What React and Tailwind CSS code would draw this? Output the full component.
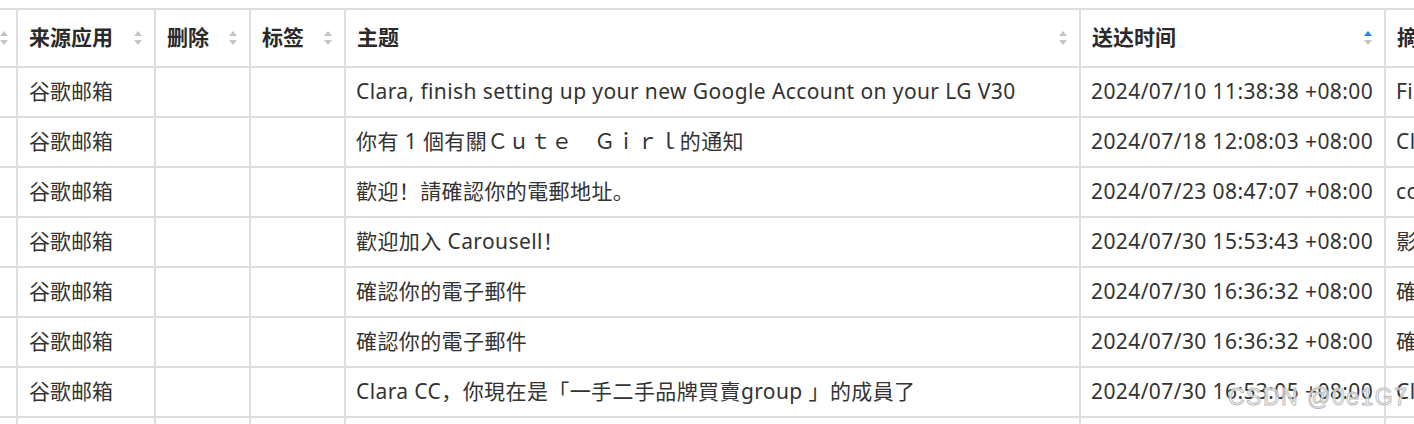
import React from 'react';

const rows = [
  ['谷歌邮箱', 'Clara, finish setting up your new Google Account on your LG V30', '2024/07/10 11:38:38 +08:00', 'Finish setting up your new Google Account'],
  ['谷歌邮箱', '你有 1 個有關Ｃｕｔｅ　Ｇｉｒｌ的通知', '2024/07/18 12:08:03 +08:00', 'Clara CC，Cute Girl 有新動態'],
  ['谷歌邮箱', '歡迎！請確認你的電郵地址。', '2024/07/23 08:47:07 +08:00', 'confirm your email address'],
  ['谷歌邮箱', '歡迎加入 Carousell！', '2024/07/30 15:53:43 +08:00', '影響力'],
  ['谷歌邮箱', '確認你的電子郵件', '2024/07/30 16:36:32 +08:00', '確認你的電子郵件'],
  ['谷歌邮箱', '確認你的電子郵件', '2024/07/30 16:36:32 +08:00', '確認你的電子郵件'],
  ['谷歌邮箱', 'Clara CC，你現在是「一手二手品牌買賣group 」的成員了', '2024/07/30 16:53:05 +08:00', 'Clara CC'],
  ['谷歌邮箱', '歡迎加入', '2024/07/31 09:12:44 +08:00', '歡迎'],
];

const SortIcon = ({ active }) => (
  <svg width="8" height="14" viewBox="0 0 8 14" className="shrink-0">
    <polygon points="0,5 4,0 8,5" fill={active ? '#1e88e5' : '#c4c4c4'} />
    <polygon points="0,9 8,9 4,14" fill="#c4c4c4" />
  </svg>
);

const cell = 'border-r-2 border-b-2 border-[#dedede] overflow-hidden whitespace-nowrap flex items-center';

export default function App() {
  const headers = [
    { label: '', active: false },
    { label: '来源应用' },
    { label: '删除' },
    { label: '标签' },
    { label: '主题' },
    { label: '送达时间', active: true },
    { label: '摘要' },
  ];

  return (
    <div
      className="relative w-[1414px] h-[424px] overflow-hidden bg-white pt-2 text-[#333] text-[21px] tracking-[0.4px]"
      style={{ fontFamily: '"Noto Sans", "Noto Sans CJK SC", sans-serif' }}
    >
      <div className="grid grid-cols-[18px_138px_95px_95px_735px_305px_400px] border-t-2 border-[#dedede] w-max">
        {headers.map((h, i) => (
          <div key={i} className={`${cell} h-[58px] font-bold text-[#2a2a2a] tracking-normal justify-between ${i === 0 ? 'pl-0 pr-[8px]' : 'pl-[11px] pr-[12px]'}`}>
            <span>{h.label}</span>
            {i < 6 && <SortIcon active={h.active} />}
          </div>
        ))}
        {rows.map((r, ri) => (
          <React.Fragment key={ri}>
            <div className={`${cell} h-[50px]`} />
            <div className={`${cell} h-[50px] pl-[11px] tracking-normal`}>{r[0]}</div>
            <div className={`${cell} h-[50px]`} />
            <div className={`${cell} h-[50px]`} />
            <div className={`${cell} h-[50px] pl-[10px]`}>{r[1]}</div>
            <div className={`${cell} h-[50px] pl-[10px]`}>{r[2]}</div>
            <div className={`${cell} h-[50px] pl-[10px]`}>{r[3]}</div>
          </React.Fragment>
        ))}
      </div>
      <div
        className="absolute left-[1228px] top-[386px] text-[23px] leading-none tracking-[1.5px] text-white/70 [-webkit-text-stroke:1px_#bdbdbd] whitespace-nowrap pointer-events-none"
        style={{ fontFamily: '"Liberation Sans", sans-serif' }}
      >
        CSDN @0e1G7
      </div>
    </div>
  );
}
